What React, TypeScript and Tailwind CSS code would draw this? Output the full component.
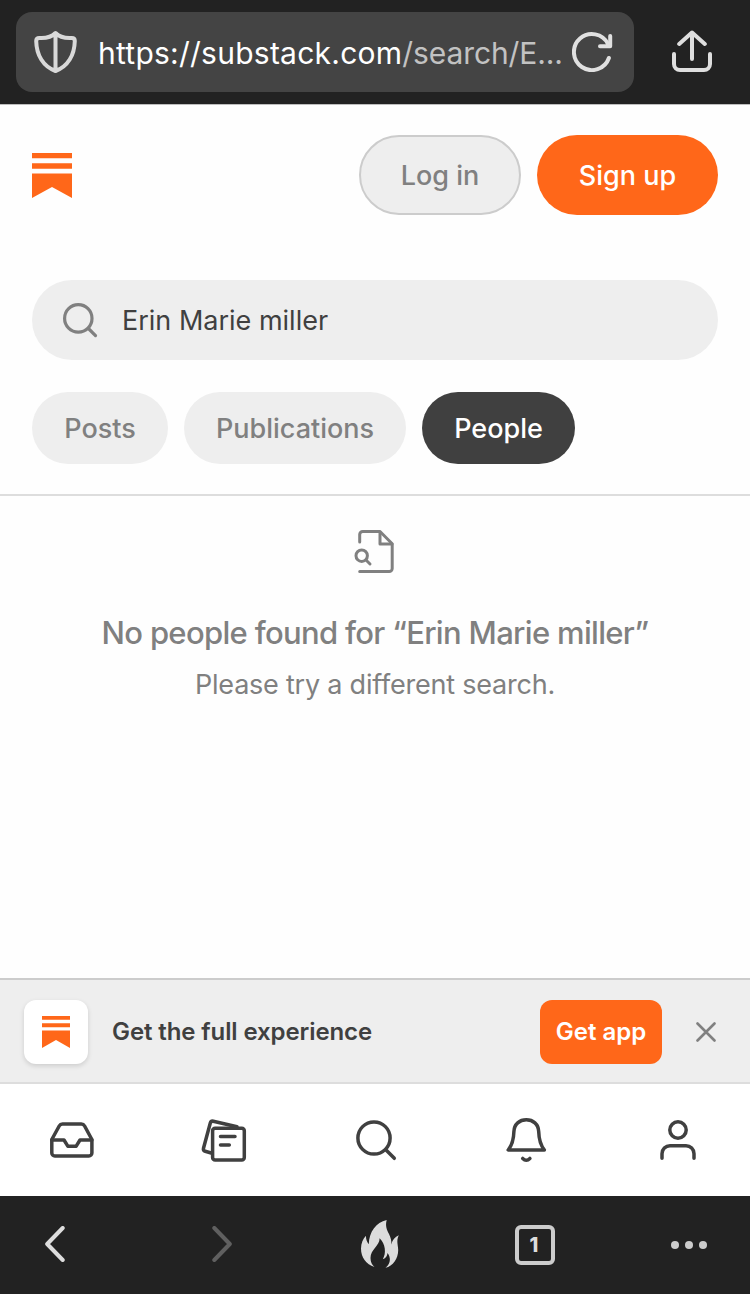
import React from 'react';

interface IconProps {
  className?: string;
}

function Logo({ className }: IconProps) {
  return (
    <svg viewBox="0 0 40 45.4" preserveAspectRatio="none" className={className} fill="#ff6719">
      <path d="M0 0h40v5.4H0zM0 10.4h40v5.5H0zM0 20.6h40v24.8L20 34.2 0 45.4z" />
    </svg>
  );
}

function ShieldIcon() {
  return (
    <svg width="43" height="44" viewBox="0 0 43 44" fill="none" stroke="#d9d9d9" strokeWidth="4" strokeLinejoin="round">
      <path d="M21.5 3C17.5 7.2 12 8.4 5.2 8Q2.2 8 2.2 11C2.5 25 9 36.5 21.5 41C34 36.5 40.5 25 40.8 11Q40.8 8 37.8 8C31 8.4 25.5 7.2 21.5 3ZM21.5 3V41" />
    </svg>
  );
}

function ReloadIcon() {
  return (
    <svg width="41" height="40" viewBox="0 0 41 40" fill="none" stroke="#e0e0e0" strokeWidth="4" strokeLinecap="round" strokeLinejoin="round">
      <path d="M36.9 26A18 18 0 1 1 36 12" />
      <path d="M38.2 4V14.2H28" />
    </svg>
  );
}

function ShareIcon() {
  return (
    <svg width="40" height="42" viewBox="0 0 40 42" fill="none" stroke="#dedede" strokeWidth="4" strokeLinecap="round" strokeLinejoin="round">
      <path d="M20 29V2.5M7.2 14 20 2.5 32.8 14" />
      <path d="M2 24V34a6 6 0 0 0 6 6h24a6 6 0 0 0 6-6V24" />
    </svg>
  );
}

function EmptyIcon() {
  return (
    <svg width="43" height="46" viewBox="0 0 43 46" fill="none" stroke="#808080" strokeWidth="3" strokeLinecap="round" strokeLinejoin="round">
      <path d="M5.7 13V5.5a3 3 0 0 1 3-3H26L38.2 14.7V39.5a3 3 0 0 1-3 3H5.7" />
      <path d="M26 3V15H38" />
      <circle cx="7.7" cy="26.7" r="5.7" />
      <path d="M12 31l4 4" />
    </svg>
  );
}

function FlameIcon() {
  return (
    <svg width="38" height="48" viewBox="0 0 38 48" fill="#dcdcdc">
      <path d="M25.7 0C24 6 26 10 28 14C29.8 17.5 30.6 21 30.4 24.5C31.3 20 34 17 37.8 15.3C35 21 37.2 25 37.2 30C37.2 39 32 46 24.5 47.8C30.5 43 29.5 37 26.5 33C26.3 36 25 38 21.8 39.2C25.5 33 24.5 24 18.6 18.2C18.8 26 9.5 29 9.5 38C9.5 42 11 45 13.5 47C5 44.5 0 37 0 28.5C0 23 2 19 5 15.7C4.8 19 6 22 7.8 24.3C8 12 15 2.5 25.7 0Z" />
    </svg>
  );
}

const navIcons = [
  {
    id: 'inbox',
    drawing: (
      <>
        <path d="M3.8 23.5 11.2 10Q12.3 8 14.5 8H33.3Q35.5 8 36.6 10L43.9 23.5V37a3 3 0 0 1-3 3H6.8a3 3 0 0 1-3-3Z" />
        <path d="M3.8 24H16L19.8 30.2H28.2L32 24H43.9" />
      </>
    ),
  },
  {
    id: 'posts',
    drawing: (
      <>
        <rect x="12.6" y="12.3" width="31.7" height="31.7" rx="2.5" />
        <path d="M37 10.8 13.3 5.2Q11 4.7 10.3 7L3.5 32.2Q2.9 34.6 5.2 35.3L12 37.2" />
        <path d="M20.5 20.5H35M20.5 29H29.3" />
      </>
    ),
  },
  {
    id: 'search',
    drawing: (
      <>
        <circle cx="23" cy="22" r="16.1" />
        <path d="M34.8 33.8 43.3 42.3" />
      </>
    ),
  },
  {
    id: 'alerts',
    drawing: (
      <>
        <path d="M5.2 34H41.4C37 28.5 35.9 23 35.7 15.5C35.4 8 30 3.8 23.3 3.8S11.2 8 10.9 15.5C10.7 23 9.6 28.5 5.2 34Z" />
        <path d="M19.7 42.4Q23.3 46 26.9 42.4" />
      </>
    ),
  },
  {
    id: 'profile',
    drawing: (
      <>
        <circle cx="24" cy="14" r="8.2" />
        <path d="M8 42.2V37.7a8 8 0 0 1 8-8h16a8 8 0 0 1 8 8v4.5" />
      </>
    ),
  },
];

export default function App() {
  return (
    <div className="flex h-[1294px] w-[750px] flex-col overflow-hidden bg-[#fefefe] font-['Inter',sans-serif] text-[#808080]">
      {/* Address bar */}
      <div className="flex h-[105px] shrink-0 items-start border-b border-[#bdbdbd] bg-[#222222] pt-3 pl-4">
        <div className="flex h-20 w-[618px] items-center rounded-2xl bg-[#444444] pl-[18px]">
          <ShieldIcon />
          <div className="ml-[21px] w-[474px] whitespace-nowrap pt-0.5 text-[30px] leading-10 tracking-[-0.1px] text-[#c2c2c2]">
            <span className="tracking-[0.25px] text-white">https://substack.com</span>/search/E...
          </div>
          <ReloadIcon />
        </div>
        <div className="ml-[38px] pt-[18px]">
          <ShareIcon />
        </div>
      </div>

      {/* Header */}
      <header className="flex h-[140px] shrink-0 items-center justify-between px-8">
        <Logo className="h-[45px] w-10" />
        <div className="flex gap-4 text-[27px] font-medium">
          <button className="h-20 w-[162px] rounded-full border-2 border-[#cccccc] bg-[#eeeeee] pt-0.5">Log in</button>
          <button className="h-20 w-[181px] rounded-full bg-[#ff6719] pt-0.5 text-white">Sign up</button>
        </div>
      </header>

      {/* Search and filters */}
      <section className="h-[251px] shrink-0 border-b-2 border-[#dddddd] px-8 pt-[35px]">
        <div className="flex h-20 items-center rounded-full bg-[#eeeeee] pl-[31px]">
          <svg width="35" height="35" viewBox="0 0 35 35" fill="none" stroke="#808080" strokeWidth="3.2" strokeLinecap="round">
            <circle cx="15.3" cy="15.4" r="13.7" />
            <path d="M25.4 25.5 32.5 32.6" />
          </svg>
          <span className="ml-6 pt-0.5 text-[27px] text-[#404040]">Erin Marie miller</span>
        </div>
        <div className="mt-8 flex gap-4 text-[27px] font-medium">
          <button className="h-[72px] w-[136px] rounded-full bg-[#eeeeee] pt-0.5">Posts</button>
          <button className="h-[72px] w-[222px] rounded-full bg-[#eeeeee] pt-0.5">Publications</button>
          <button className="h-[72px] w-[153px] rounded-full bg-[#404040] pt-0.5 text-white">People</button>
        </div>
      </section>

      {/* Empty state */}
      <main className="flex flex-1 flex-col items-center pt-[33px]">
        <EmptyIcon />
        <h1 className="mt-[38px] whitespace-nowrap text-[31px] leading-10 font-medium tracking-[-0.68px]">
          No people found for “Erin Marie miller”
        </h1>
        <p className="mt-3 whitespace-nowrap text-[27px] leading-10 tracking-[-0.22px]">Please try a different search.</p>
      </main>

      {/* App banner */}
      <div className="flex h-[106px] shrink-0 items-center border-y-2 border-t-[#cccccc] border-b-[#dddddd] bg-[#eeeeee] pt-0.5 pl-6">
        <div className="flex size-16 items-center justify-center rounded-xl bg-white shadow-[0_2px_5px_rgba(0,0,0,0.14)]">
          <Logo className="h-8 w-7" />
        </div>
        <span className="ml-6 w-[428px] whitespace-nowrap text-[24px] font-semibold tracking-[-0.1px] text-[#404040]">
          Get the full experience
        </span>
        <button className="h-16 w-[122px] rounded-xl bg-[#ff6719] text-[24px] font-semibold whitespace-nowrap text-white">
          Get app
        </button>
        <svg width="20" height="20" viewBox="0 0 20 20" className="ml-[34px]" stroke="#808080" strokeWidth="2.6" strokeLinecap="round">
          <path d="M1.5 1.5 18.5 18.5M18.5 1.5 1.5 18.5" />
        </svg>
      </div>

      {/* Site navigation */}
      <nav className="flex h-28 shrink-0 items-center justify-between bg-white px-12">
        {navIcons.map((icon) => (
          <svg
            key={icon.id}
            width="48"
            height="48"
            viewBox="0 0 48 48"
            fill="none"
            stroke="#404040"
            strokeWidth="3.5"
            strokeLinecap="round"
            strokeLinejoin="round"
          >
            {icon.drawing}
          </svg>
        ))}
      </nav>

      {/* Browser toolbar */}
      <div className="flex h-[98px] shrink-0 items-center bg-[#222222] pl-[45px]">
        <svg width="20" height="36" viewBox="0 0 20 36" className="mb-0.5" fill="none" stroke="#dddddd" strokeWidth="4" strokeLinecap="round" strokeLinejoin="round">
          <path d="M17.7 2 2.2 18 17.7 34" />
        </svg>
        <svg width="20" height="36" viewBox="0 0 20 36" className="mb-0.5 ml-[147px]" fill="none" stroke="#606060" strokeWidth="4" strokeLinecap="round" strokeLinejoin="round">
          <path d="M2.3 2 17.8 18 2.3 34" />
        </svg>
        <div className="mb-0.5 ml-[129px]">
          <FlameIcon />
        </div>
        <div className="ml-[116px] flex size-10 items-center justify-center rounded-md border-4 border-[#cccccc] pr-0.5 text-[20px] font-extrabold text-[#dddddd]">
          1
        </div>
        <div className="ml-[116px] flex gap-1.5">
          <span className="size-2 rounded-full bg-[#cccccc]" />
          <span className="size-2 rounded-full bg-[#cccccc]" />
          <span className="size-2 rounded-full bg-[#cccccc]" />
        </div>
      </div>
    </div>
  );
}
